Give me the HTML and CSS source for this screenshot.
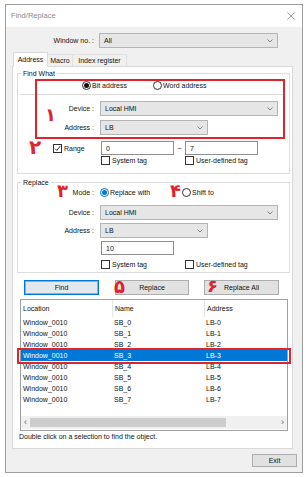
FILE: index.html
```html
<!DOCTYPE html>
<html>
<head>
<meta charset="utf-8">
<link rel="stylesheet" href="styles.css">
</head>
<body>
<div class="win">
  <div class="titlebar">
    <span class="title">Find/Replace</span>
    <svg class="close" width="8" height="8" viewBox="0 0 8 8"><path d="M0.5 0.5L7.5 7.5M7.5 0.5L0.5 7.5" stroke="#8c8c8c" stroke-width="0.9"/></svg>
  </div>

  <div class="row winno">
    <span class="lbl lbl-win">Window no. :</span>
    <div class="select sel-win"><span>All</span><svg class="chev" width="6" height="4" viewBox="0 0 6 4"><path d="M0.5 0.5L3 3L5.5 0.5" fill="none" stroke="#777" stroke-width="0.9"/></svg></div>
  </div>

  <div class="tabs">
    <span class="tab active t-addr">Address</span>
    <span class="tab t-macro">Macro</span>
    <span class="tab t-index">Index register</span>
  </div>

  <div class="panel">
    <fieldset class="group g-find">
      <legend>Find What</legend>
      <div class="row radios">
        <span class="opt opt-bit"><span class="radio on"></span>Bit address</span>
        <span class="opt opt-word"><span class="radio"></span>Word address</span>
      </div>
      <div class="sep"></div>
      <div class="row frow r-dev1">
        <span class="lbl">Device :</span>
        <div class="select sel-long"><span>Local HMI</span><svg class="chev" width="6" height="4" viewBox="0 0 6 4"><path d="M0.5 0.5L3 3L5.5 0.5" fill="none" stroke="#777" stroke-width="0.9"/></svg></div>
      </div>
      <div class="row frow r-addr1">
        <span class="lbl">Address :</span>
        <div class="select sel-short"><span>LB</span><svg class="chev" width="6" height="4" viewBox="0 0 6 4"><path d="M0.5 0.5L3 3L5.5 0.5" fill="none" stroke="#777" stroke-width="0.9"/></svg></div>
      </div>
      <div class="row r-range">
        <span class="opt opt-range"><span class="check on"><svg width="7" height="7" viewBox="0 0 7 7"><path d="M1 3.6L2.8 5.4L6.2 1.2" fill="none" stroke="#222" stroke-width="0.9"/></svg></span>Range</span>
        <span class="input in-from">0</span>
        <span class="tilde">~</span>
        <span class="input in-to">7</span>
      </div>
      <div class="row tags r-tags1">
        <span class="opt opt-sys"><span class="check"></span>System tag</span>
        <span class="opt opt-user"><span class="check"></span>User-defined tag</span>
      </div>
    </fieldset>

    <fieldset class="group g-rep">
      <legend>Replace</legend>
      <div class="row r-mode">
        <span class="lbl">Mode :</span>
        <span class="opt opt-rw"><span class="radio on blue"></span>Replace with</span>
        <span class="opt opt-shift"><span class="radio"></span>Shift to</span>
      </div>
      <div class="row frow r-dev2">
        <span class="lbl">Device :</span>
        <div class="select sel-long"><span>Local HMI</span><svg class="chev" width="6" height="4" viewBox="0 0 6 4"><path d="M0.5 0.5L3 3L5.5 0.5" fill="none" stroke="#777" stroke-width="0.9"/></svg></div>
      </div>
      <div class="row frow r-addr2">
        <span class="lbl">Address :</span>
        <div class="select sel-short"><span>LB</span><svg class="chev" width="6" height="4" viewBox="0 0 6 4"><path d="M0.5 0.5L3 3L5.5 0.5" fill="none" stroke="#777" stroke-width="0.9"/></svg></div>
      </div>
      <div class="row r-val">
        <span class="input in-val">10</span>
      </div>
      <div class="row tags r-tags2">
        <span class="opt opt-sys"><span class="check"></span>System tag</span>
        <span class="opt opt-user"><span class="check"></span>User-defined tag</span>
      </div>
    </fieldset>

    <div class="buttons">
      <span class="btn btn-find">Find</span>
      <span class="btn btn-rep">Replace</span>
      <span class="btn btn-repall">Replace All</span>
    </div>

    <div class="list">
      <div class="lhead">
        <span>Location</span><span>Name</span><span>Address</span>
      </div>
      <div class="lrow"><span>Window_0010</span><span>SB_0</span><span>LB-0</span></div>
      <div class="lrow"><span>Window_0010</span><span>SB_1</span><span>LB-1</span></div>
      <div class="lrow"><span>Window_0010</span><span>SB_2</span><span>LB-2</span></div>
      <div class="lrow sel"><span>Window_0010</span><span>SB_3</span><span>LB-3</span><span class="mark-sel"></span></div>
      <div class="lrow"><span>Window_0010</span><span>SB_4</span><span>LB-4</span></div>
      <div class="lrow"><span>Window_0010</span><span>SB_5</span><span>LB-5</span></div>
      <div class="lrow"><span>Window_0010</span><span>SB_6</span><span>LB-6</span></div>
      <div class="lrow"><span>Window_0010</span><span>SB_7</span><span>LB-7</span></div>
      <div class="hscroll">
        <span class="arr">&lsaquo;</span>
        <span class="thumb"></span>
        <span class="track"></span>
        <span class="arr">&rsaquo;</span>
      </div>
    </div>

    <div class="hint">Double click on a selection to find the object.</div>

    <span class="mark-box"></span>
    <span class="num n1">۱</span>
    <span class="num n2">۲</span>
    <span class="num n3">۳</span>
    <span class="num n4">۴</span>
    <span class="num n5">۵</span>
    <span class="num n6">۶</span>
  </div>

  <div class="footer">
    <span class="btn btn-exit">Exit</span>
  </div>
</div>
</body>
</html>
```

FILE: styles.css
```css
* { box-sizing: border-box; }
html, body { margin: 0; padding: 0; }
body {
  background: #ffffff;
  font-family: "Liberation Sans", Arial, sans-serif;
  font-size: 7px;
  line-height: 1;
  color: #111;
}
.win {
  margin: 4px 0 0 5px;
  width: 298px;
  height: 469px;
  border: 1px solid #9d9d9d;
  background: #f0f0f0;
  display: flex;
  flex-direction: column;
}
.titlebar {
  height: 22px;
  background: #fff;
  display: flex;
  align-items: center;
  justify-content: space-between;
  padding: 0 7px 0 5px;
  flex: none;
}
.title { font-size: 7.6px; color: #8a8a8a; }
.close { display: block; }

.row { display: flex; align-items: center; }
.lbl { text-align: right; flex: none; }

.winno { margin-top: 6px; height: 15px; }
.lbl-win { width: 91px; padding-right: 3px; }
.select {
  height: 15px;
  background: #e6e6e6;
  border: 1px solid #b4b4b4;
  display: flex;
  align-items: center;
  justify-content: space-between;
  padding: 0 4px 0 4px;
  flex: none;
}
.sel-win { width: 179px; margin-left: 2px; }
.sel-long { width: 178px; }
.sel-short { width: 108px; }
.chev { display: block; }

.tabs {
  margin: 4px 0 0 7px;
  height: 14px;
  display: flex;
  align-items: flex-end;
  flex: none;
}
.tab {
  height: 12px;
  display: flex;
  align-items: center;
  justify-content: center;
  border: 1px solid #e0e0e0;
  border-bottom: none;
  background: #f0f0f0;
}
.tab.active {
  height: 15px;
  margin-bottom: -1px;
  background: #fff;
  border-color: #d9d9d9;
  position: relative;
  z-index: 1;
  padding-bottom: 1px;
}
.t-addr { width: 35px; }
.t-macro { width: 25px; border-left: none; }
.t-index { width: 54px; border-left: none; }

.panel {
  margin-left: 6px;
  width: 281px;
  height: 383px;
  border: 1px solid #d9d9d9;
  background: #fff;
  position: relative;
  flex: none;
  display: flex;
  flex-direction: column;
}

.group {
  margin: 2px 0 0 4px;
  width: 273px;
  border: 1px solid #dcdcdc;
  padding: 0;
  min-width: 0;
}
.group legend {
  margin-left: 3px;
  padding: 0 2px;
  line-height: 9px;
  font-size: 7px;
}
.g-find { position: relative; padding-bottom: 7px; }
.g-rep { margin-top: 4px; padding-bottom: 2px; }

.radios { height: 12px; margin-top: 1px; }
.opt { display: flex; align-items: center; flex: none; }
.radio {
  width: 9px; height: 9px;
  border: 1px solid #333;
  border-radius: 50%;
  background: #fff;
  display: inline-flex;
  align-items: center;
  justify-content: center;
  margin-right: 1px;
}
.radio.on::after {
  content: "";
  width: 5px; height: 5px;
  border-radius: 50%;
  background: #111;
}
.radio.blue { border-color: #0078d7; }
.radio.blue::after { background: #0078d7; }
.opt-bit { margin-left: 64px; }
.opt-word { margin-left: 26px; }

.sep {
  margin: 3px 5px 0 2px;
  border-top: 1px solid #d8d8d8;
}
.frow .lbl { width: 79px; padding-right: 3px; }
.frow .select { margin-left: 3px; }
.r-dev1 { margin-top: 6px; }
.r-addr1 { margin-top: 4px; }

.r-range { margin-top: 6px; height: 14px; }
.check {
  width: 9px; height: 9px;
  border: 1px solid #333;
  background: #fff;
  display: inline-flex;
  align-items: center;
  justify-content: center;
  margin-right: 2px;
  flex: none;
}
.check svg { display: block; }
.opt-range { margin-left: 35px; width: 48px; }
.input {
  height: 14px;
  width: 73px;
  border: 1px solid #8f8f8f;
  background: #fff;
  display: flex;
  align-items: center;
  padding-left: 4px;
  flex: none;
}
.tilde { width: 11px; text-align: center; }
.tags { height: 11px; }
.r-tags1 { margin-top: 0; }
.opt-sys { margin-left: 83px; width: 84px; }

.r-mode { height: 11px; margin-top: 0; }
.r-mode .lbl { width: 79px; padding-right: 3px; }
.opt-rw { margin-left: 3px; width: 82px; }
.r-dev2 { margin-top: 7px; }
.r-addr2 { margin-top: 3px; }
.r-val { margin-top: 3px; height: 14px; }
.in-val { margin-left: 83px; }
.r-tags2 { margin-top: 4px; }

.buttons {
  margin: 7px 0 0 11px;
  display: flex;
  height: 15px;
}
.btn {
  height: 15px;
  background: #e1e1e1;
  border: 1px solid #adadad;
  display: flex;
  align-items: center;
  justify-content: center;
  flex: none;
}
.btn-find { width: 75px; border: 1px solid #0078d7; box-shadow: inset 0 0 0 1px #79b4e6; background: #e3e8ee; }
.btn-rep { width: 74px; margin-left: 16px; }
.btn-repall { width: 75px; margin-left: 15px; }

.list {
  margin: 4px 0 0 7px;
  width: 268px;
  height: 132px;
  border: 1px solid #a0a0a0;
  background: #fff;
  display: flex;
  flex-direction: column;
  flex: none;
}
.lhead, .lrow {
  display: grid;
  grid-template-columns: 91px 92px 1fr;
  align-items: center;
  position: relative;
}
.lhead { height: 17px; }
.lhead span + span { border-left: 1px solid #e5e5e5; }
.lhead span { height: 17px; display: flex; align-items: center; padding-left: 2px; }
.lrow { height: 11px; }
.lrow span { padding-left: 2px; }
.lrow.sel { background: #0078d7; color: #fff; }
.hscroll {
  margin-top: auto;
  margin-bottom: 1px;
  height: 13px;
  display: flex;
  align-items: center;
  background: #f0f0f0;
}
.arr { width: 9px; text-align: center; font-size: 9px; color: #606060; flex: none; }
.thumb { width: 196px; height: 9px; background: #cdcdcd; flex: none; }
.track { flex: 1; }

.hint { margin: 1px 0 0 6px; height: 9px; line-height: 9px; }

.footer {
  display: flex;
  justify-content: flex-end;
  padding: 5px 5px 0 0;
}
.btn-exit { width: 45px; height: 13px; }

/* annotations (overlay) */
.mark-box {
  position: absolute;
  left: 22px; top: 12px;
  width: 250px; height: 60px;
  border: 2px solid #e0232d;
}
.mark-sel {
  position: absolute;
  left: -4px; right: -4px; top: -2px; bottom: -3px;
  border: 2px solid #e0232d;
  padding: 0;
}
.num {
  position: absolute;
  color: #e0232d;
  font-family: "DejaVu Sans", sans-serif;
  font-weight: bold;
  font-size: 18px;
  line-height: 1;
}
.n1 { left: 32px; top: 39px; }
.n2 { left: 16px; top: 70px; font-size: 20px; }
.n3 { left: 44px; top: 115px; }
.n4 { left: 157px; top: 115px; }
.n5 { left: 101px; top: 211px; }
.n6 { left: 194px; top: 210px; }
```
